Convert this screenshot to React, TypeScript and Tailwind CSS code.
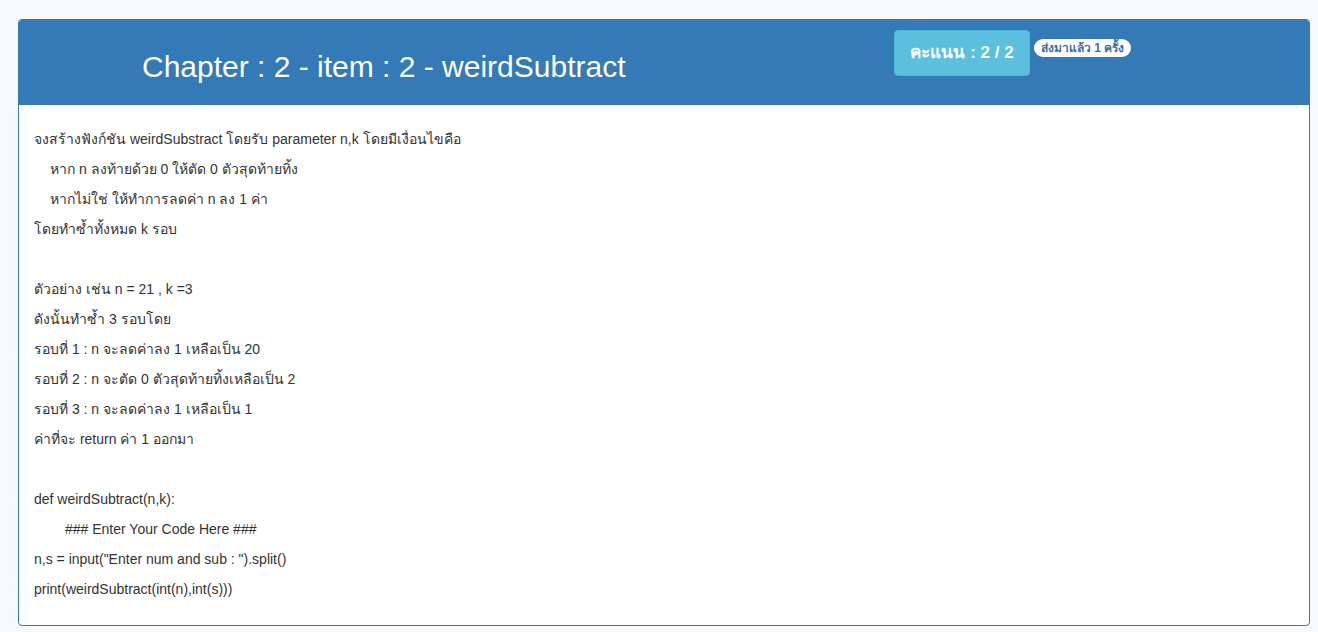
import React from 'react';

const lines: { text: string; indent?: number }[] = [
  { text: 'จงสร้างฟังก์ชัน weirdSubstract โดยรับ parameter n,k โดยมีเงื่อนไขคือ' },
  { text: 'หาก n ลงท้ายด้วย 0 ให้ตัด 0 ตัวสุดท้ายทิ้ง', indent: 1 },
  { text: 'หากไม่ใช่ ให้ทำการลดค่า n ลง 1 ค่า', indent: 1 },
  { text: 'โดยทำซ้ำทั้งหมด k รอบ' },
  { text: '' },
  { text: 'ตัวอย่าง เช่น n = 21 , k =3' },
  { text: 'ดังนั้นทำซ้ำ 3 รอบโดย' },
  { text: 'รอบที่ 1 : n จะลดค่าลง 1 เหลือเป็น 20' },
  { text: 'รอบที่ 2 : n จะตัด 0 ตัวสุดท้ายทิ้งเหลือเป็น 2' },
  { text: 'รอบที่ 3 : n จะลดค่าลง 1 เหลือเป็น 1' },
  { text: 'ค่าที่จะ return ค่า 1 ออกมา' },
  { text: '' },
  { text: 'def weirdSubtract(n,k):' },
  { text: '### Enter Your Code Here ###', indent: 2 },
  { text: 'n,s = input("Enter num and sub : ").split()' },
  { text: 'print(weirdSubtract(int(n),int(s)))' },
];

export default function App() {
  return (
    <div className="min-h-screen bg-[#f7f9fd] pt-[19px] font-['Liberation_Sans',Arial,sans-serif]">
      <div className="ml-[18px] w-[1292px] h-[607px] rounded-[4px] border border-[#337ab7] bg-white overflow-hidden">
        {/* Heading */}
        <div className="flex h-[85px] bg-[#337ab7] items-start">
          <div className="w-[875px] pl-[123px] shrink-0">
            <h1 className="mt-[30px] text-[30px] leading-[34px] text-white">
              Chapter : 2 - item : 2 - weirdSubtract
            </h1>
          </div>
          <div className="mt-[10px] flex h-[46px] w-[136px] items-center justify-center rounded-[4px] border border-[#46b8da] bg-[#5bc0de] text-[17px] font-bold text-white">
            คะแนน : 2 / 2
          </div>
          <span className="ml-[4px] mt-[19px] rounded-full bg-white px-[7px] text-[12px] font-bold leading-[18px] text-[#3a6ea5]">
            ส่งมาแล้ว 1 ครั้ง
          </span>
        </div>

        {/* Body */}
        <div className="px-[15px] pt-[19px] text-[14px] leading-[30px] text-[#333]">
          {lines.map((l, i) => (
            <div
              key={i}
              className={
                l.indent === 2 ? 'h-[30px] pl-[31px]' : l.indent === 1 ? 'h-[30px] pl-[16px]' : 'h-[30px]'
              }
            >
              {l.text}
            </div>
          ))}
        </div>
      </div>
    </div>
  );
}
